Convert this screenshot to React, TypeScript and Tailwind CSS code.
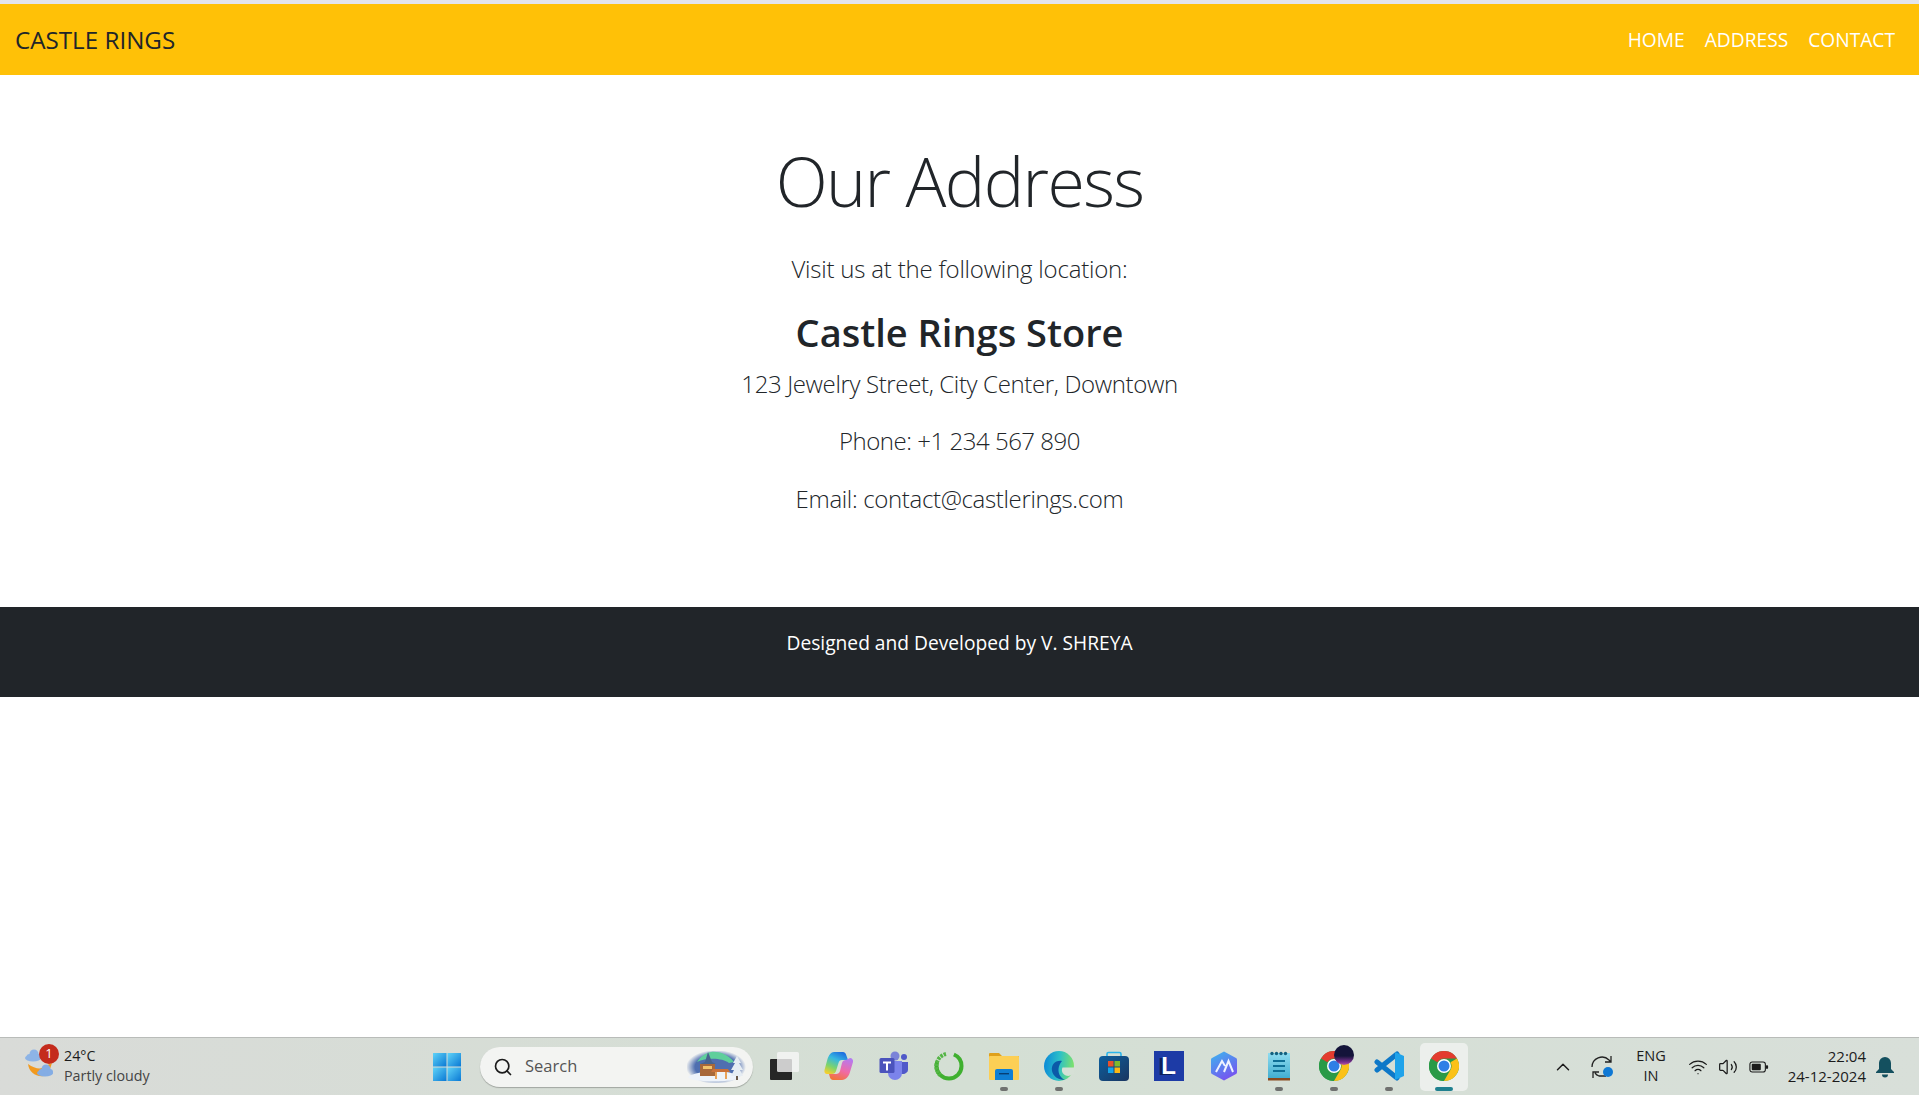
import React from "react"
import { ChevronUp, Search, Volume2, Wifi } from "lucide-react"

const font = "font-['Open_Sans','Noto_Sans',sans-serif]"

const Cloud = ({ x, y, fill }: { x: number; y: number; fill: string }) => (
  <g transform={`translate(${x} ${y})`} fill={fill}>
    <ellipse cx="8" cy="9" rx="8" ry="3.500" />
    <circle cx="9" cy="5" r="4.500" />
    <circle cx="4.500" cy="8" r="3" />
    <circle cx="13" cy="8" r="3" />
  </g>
)

const WeatherIcon = () => (
  <div className="relative h-[40px] w-[40px] shrink-0">
    <svg viewBox="0 0 40 40" className="h-full w-full">
      <Cloud x={5} y={2} fill="#8db4e6" />
      <path d="M8 17c1 9 10 15 20 11l4-12-7 3c-3 4-10 3-17-2z" fill="#f29a1f" />
      <Cloud x={17} y={17} fill="#84ade4" />
    </svg>
    <span className="absolute left-[19px] top-[-3px] flex h-[20px] w-[20px] items-center justify-center rounded-full bg-[#c42b1c] text-[13px] leading-none text-white">
      1
    </span>
  </div>
)

const StartIcon = () => (
  <svg viewBox="0 0 30 30" className="h-[30px] w-[30px]">
    <defs>
      <linearGradient id="win" x1="0" y1="0" x2="1" y2="1">
        <stop offset="0" stopColor="#5fd3f8" />
        <stop offset="1" stopColor="#0a78d4" />
      </linearGradient>
    </defs>
    <rect x="1" y="1" width="13.500" height="13.500" fill="url(#win)" />
    <rect x="15.500" y="1" width="13.500" height="13.500" fill="url(#win)" />
    <rect x="1" y="15.500" width="13.500" height="13.500" fill="url(#win)" />
    <rect x="15.500" y="15.500" width="13.500" height="13.500" fill="url(#win)" />
  </svg>
)

const SearchArt = () => (
  <svg viewBox="0 0 61 32" className="h-[32px] w-[61px]">
    <defs>
      <radialGradient id="halo" cx="0.5" cy="0.5" r="0.5">
        <stop offset="0.7" stopColor="#4f6fb0" />
        <stop offset="1" stopColor="#4f6fb0" stopOpacity="0" />
      </radialGradient>
    </defs>
    <ellipse cx="29" cy="16" rx="30" ry="17" fill="url(#halo)" />
    <path d="M10 11c4-6 9-9 14-10 7-1 17 2 23 10l-5 1c-6-5-22-6-32-1z" fill="#5fcf9c" />
    <path d="M1 26c10-7 42-8 52 0-4 6-48 6-52 0z" fill="#eef3fa" />
    <path d="M21 1l4 10 4 2H13l5-2z" fill="#47648f" />
    <rect x="13" y="13" width="15" height="12" fill="#a8683a" />
    <rect x="16" y="15" width="9" height="3" fill="#f2c36b" />
    <path d="M26 18h15l2 3H24z" fill="#c9713a" />
    <rect x="28" y="21" width="2" height="7" fill="#e8a25a" />
    <rect x="38" y="21" width="2" height="7" fill="#e8a25a" />
    <path d="M50 5l4 7-2 0 4 7-3 0 3 6H44l3-6-3 0 4-7-2 0z" fill="#e6edf3" />
    <rect x="49" y="25" width="2" height="4" fill="#6b5a4a" />
  </svg>
)

const TaskView = () => (
  <svg viewBox="0 0 30 30" className="h-[30px] w-[30px]">
    <rect x="1" y="8" width="22" height="21" rx="1" fill="#262626" />
    <rect x="8" y="1" width="22" height="20" rx="1.500" fill="#f6f6f6" fillOpacity="0.8" />
  </svg>
)

const Copilot = () => (
  <svg viewBox="0 0 30 30" className="h-[30px] w-[30px]">
    <defs>
      <linearGradient id="cp1" x1="0.7" y1="0" x2="0.2" y2="1">
        <stop offset="0" stopColor="#1f6fe0" />
        <stop offset="0.35" stopColor="#36b8e0" />
        <stop offset="0.7" stopColor="#7ed46a" />
        <stop offset="1" stopColor="#f6cf2e" />
      </linearGradient>
      <linearGradient id="cp2" x1="0.7" y1="0" x2="0.3" y2="1">
        <stop offset="0" stopColor="#b57af0" />
        <stop offset="0.55" stopColor="#f06aa6" />
        <stop offset="1" stopColor="#f2733a" />
      </linearGradient>
    </defs>
    <path d="M10 1h9c1.500 0 2.500 1 3 2.500L24 9h-6c-2 0-3 1-3.500 3l-2.500 8c-.5 2-2 3-4 3H3c-2 0-3-2-2.500-4l3-11C5 4 7 1 10 1z" fill="url(#cp1)" />
    <path d="M26 7c2 0 3.500 2 3 4l-3 10c-1 4-4 8-8 8H9c-1.500 0-2.500-1-3-2.500L5 23h7c2 0 3.500-1 4-3l2-8c.5-2 2-3 4-3z" fill="url(#cp2)" />
  </svg>
)

const Teams = () => (
  <svg viewBox="0 0 30 30" className="h-[30px] w-[30px]">
    <circle cx="16" cy="5" r="4.500" fill="#7b83d8" />
    <circle cx="25" cy="6" r="3" fill="#5059c9" />
    <path d="M21 11h8v8a5 5 0 0 1-8 3z" fill="#5059c9" />
    <path d="M9 10h14v12a7 7 0 0 1-14 0z" fill="#7b83eb" />
    <rect x="0.500" y="7" width="15" height="15" rx="1.500" fill="#4b53bc" />
    <path d="M4 10.500h8v2H9v7H7v-7H4z" fill="#fff" />
  </svg>
)

const RingApp = () => (
  <svg viewBox="0 0 30 30" className="h-[30px] w-[30px]">
    <circle cx="15" cy="15" r="12.500" fill="none" stroke="#3fb02f" strokeWidth="4" strokeDasharray="58 20.500" strokeDashoffset="15" />
    <path d="M12 3A12.500 12.500 0 0 0 6 24" fill="none" stroke="#54b545" strokeWidth="4" strokeDasharray="2.500 1" />
  </svg>
)

const Folder = () => (
  <svg viewBox="0 0 30 30" className="h-[30px] w-[30px]">
    <path d="M0 3a1 1 0 0 1 1-1h9l3 3h17v3H0z" fill="#dfa01c" />
    <rect x="0" y="5" width="30" height="24" rx="1" fill="#fccf55" />
    <path d="M6 20a2 2 0 0 1 2-2h14a2 2 0 0 1 2 2v9H6z" fill="#0f7fd4" />
    <rect x="10" y="22" width="10" height="1.400" fill="#063f74" />
  </svg>
)

const Edge = () => (
  <svg viewBox="0 0 30 30" className="h-[30px] w-[30px]">
    <defs>
      <linearGradient id="eg" x1="0" y1="0.4" x2="1" y2="0.5">
        <stop offset="0" stopColor="#0c8ad8" />
        <stop offset="0.5" stopColor="#2cc0c8" />
        <stop offset="1" stopColor="#80e26a" />
      </linearGradient>
    </defs>
    <circle cx="15" cy="15" r="15" fill="url(#eg)" />
    <path d="M30 16.500H18.500c-2 4 1 8.500 6 8.500L30 23z" fill="#d6e0d6" />
    <path d="M18 10C11 9 7 14 8 20c1 5 6 9 13 9-4-2-7-6-6.500-11 .3-3 1.500-6 3.500-8z" fill="#0b5aa8" />
  </svg>
)

const Store = () => (
  <svg viewBox="0 0 30 30" className="h-[30px] w-[30px]">
    <defs>
      <linearGradient id="st" x1="0" y1="0" x2="1" y2="1">
        <stop offset="0" stopColor="#0d5f9e" />
        <stop offset="1" stopColor="#1a3560" />
      </linearGradient>
    </defs>
    <path d="M8 7V3a1.500 1.500 0 0 1 1.500-1.500h11A1.500 1.500 0 0 1 22 3v4" fill="none" stroke="#2ab4ea" strokeWidth="1.600" />
    <rect x="0" y="5" width="30" height="25" rx="4" fill="url(#st)" />
    <rect x="9" y="10" width="5.500" height="5.500" fill="#e8512a" />
    <rect x="15.500" y="10" width="5.500" height="5.500" fill="#7fba2c" />
    <rect x="9" y="16.500" width="5.500" height="5.500" fill="#15a4ea" />
    <rect x="15.500" y="16.500" width="5.500" height="5.500" fill="#fdb813" />
  </svg>
)

const LApp = () => (
  <div className="relative flex h-[30px] w-[30px] items-center justify-center bg-[#1d3ba6] font-['Liberation_Sans',sans-serif] text-[24px] font-bold leading-none text-white">
    <span className="[text-shadow:-3px_1px_0_#0c1f5c]">L</span>
  </div>
)

const Hexagon = () => (
  <svg viewBox="0 0 30 30" className="h-[30px] w-[30px]">
    <defs>
      <linearGradient id="hx" x1="0.2" y1="0" x2="0.7" y2="1">
        <stop offset="0" stopColor="#3fb0ee" />
        <stop offset="1" stopColor="#7a4ff0" />
      </linearGradient>
    </defs>
    <path d="M15 .5l12 6.500a2 2 0 0 1 1 2v12a2 2 0 0 1-1 2l-12 6.500L3 23a2 2 0 0 1-1-2V9a2 2 0 0 1 1-2z" fill="url(#hx)" />
    <path d="M7 21l6-11 3 5M15 21l4.500-11L24 21" fill="none" stroke="#eef2ff" strokeWidth="2" />
  </svg>
)

const Notepad = () => (
  <svg viewBox="0 0 30 30" className="h-[30px] w-[30px]">
    <defs>
      <linearGradient id="np" x1="0" y1="0" x2="0" y2="1">
        <stop offset="0" stopColor="#8fdcf0" />
        <stop offset="1" stopColor="#42aed0" />
      </linearGradient>
    </defs>
    <rect x="4" y="2" width="22" height="25" fill="url(#np)" />
    <rect x="4" y="27" width="22" height="2.500" fill="#8a4a1e" />
    <circle cx="8" cy="2.500" r="1.700" fill="#14607e" />
    <circle cx="12.500" cy="2.500" r="1.700" fill="#14607e" />
    <circle cx="17" cy="2.500" r="1.700" fill="#14607e" />
    <circle cx="21.500" cy="2.500" r="1.700" fill="#14607e" />
    <path d="M9 10h12M9 15h12M9 20h12" stroke="#0f6f96" strokeWidth="1.800" />
  </svg>
)

const Chrome = () => (
  <svg viewBox="0 0 30 30" className="h-[30px] w-[30px]">
    <circle cx="15" cy="15" r="15" fill="#2a9a47" />
    <path d="M2 7.500A15 15 0 0 1 28 7.500L15 7.500A7.500 7.500 0 0 0 8.500 11.250z" fill="#e33b2e" />
    <path d="M2 7.500A15 15 0 0 1 28 7.500L15 7.500A7.500 7.500 0 0 0 8.500 11.250z" fill="#fbc117" transform="rotate(120 15 15)" />
    <path d="M2 7.500A15 15 0 0 1 28 7.500L15 7.500A7.500 7.500 0 0 0 8.500 11.250z" fill="#2a9a47" transform="rotate(240 15 15)" />
    <circle cx="15" cy="15" r="7" fill="#fff" />
    <circle cx="15" cy="15" r="5.500" fill="#2f7fe6" />
  </svg>
)

const ChromeProfile = () => (
  <div className="relative h-[30px] w-[30px]">
    <Chrome />
    <span className="absolute left-[15px] top-[-6px] h-[20px] w-[20px] rounded-full bg-[linear-gradient(180deg,#14143a_55%,#7a2f8f_85%,#c05a9a)]" />
  </div>
)

const VSCode = () => (
  <svg viewBox="0 0 30 30" className="h-[30px] w-[30px]">
    <path d="M23 3L3 19M3 11l20 16" stroke="#0d78c8" strokeWidth="5" strokeLinecap="round" />
    <path d="M21 1l9 4v20l-9 4z" fill="#1fa3ea" />
  </svg>
)

const SyncIcon = () => (
  <svg viewBox="0 0 28 28" className="h-[28px] w-[28px]">
    <path d="M3 14a10 10 0 0 1 17-7l2 2M22 3v6h-6M17 23H10a9 9 0 0 1-4-3M4 25v-6h6" fill="none" stroke="#222" strokeWidth="1.300" />
    <circle cx="19" cy="19" r="5" fill="#0f78d4" />
  </svg>
)

const BatteryIcon = () => (
  <svg viewBox="0 0 22 14" className="h-[14px] w-[20px]">
    <rect x="1" y="1.500" width="17" height="11" rx="2.500" fill="none" stroke="#1b1b1b" strokeWidth="1.200" />
    <rect x="3" y="3.500" width="10" height="7" rx="1" fill="#1b1b1b" />
    <rect x="18.500" y="5" width="2.500" height="4" rx="1" fill="#1b1b1b" />
  </svg>
)

const BellIcon = () => (
  <svg viewBox="0 0 20 22" className="h-[22px] w-[20px]">
    <path d="M10 1a6 6 0 0 1 6 6v6l3 3v1H1v-1l3-3V7a6 6 0 0 1 6-6z" fill="#14505f" />
    <path d="M7 18.500h6a3 3 0 0 1-6 0z" fill="#14505f" />
  </svg>
)

const taskApps = [
  { id: "task", icon: <TaskView /> },
  { id: "copilot", icon: <Copilot /> },
  { id: "teams", icon: <Teams /> },
  { id: "ring", icon: <RingApp /> },
  { id: "folder", icon: <Folder />, running: true },
  { id: "edge", icon: <Edge />, running: true },
  { id: "store", icon: <Store /> },
  { id: "l", icon: <LApp /> },
  { id: "hex", icon: <Hexagon /> },
  { id: "notepad", icon: <Notepad />, running: true },
  { id: "chrome2", icon: <ChromeProfile />, running: true },
  { id: "vscode", icon: <VSCode />, running: true },
  { id: "chrome", icon: <Chrome />, active: true },
]

const Taskbar = () => (
  <div className={`flex h-[58px] shrink-0 items-center border-t border-[#b9bcb9] bg-gradient-to-r from-[#d9dbd8] via-[#d4dfd4] to-[#d8dfd9] text-[#1b1b1b] ${font}`}>
    <div className="ml-[20px] flex w-[407px] shrink-0 items-center gap-[4px]">
      <WeatherIcon />
      <div className="-mt-[2px] text-[14.300px] leading-[20px]">
        <div>24°C</div>
        <div className="text-[#444]">Partly cloudy</div>
      </div>
    </div>
    <div className="flex w-[40px] shrink-0 justify-center">
      <StartIcon />
    </div>
    <div className="ml-[13px] flex h-[40px] w-[273px] shrink-0 items-center rounded-full bg-[#f3f4f2] pl-[13px] pr-[5px] shadow-[0_1px_1px_rgba(0,0,0,0.25)]">
      <Search className="h-[20px] w-[20px] text-[#1b1b1b]" strokeWidth={2} />
      <span className="ml-[12px] flex-1 text-[16.500px] text-[#555]">Search</span>
      <SearchArt />
    </div>
    <div className="ml-[3px] flex shrink-0 items-center">
      {taskApps.map((app) => (
        <div
          key={app.id}
          className={`relative mx-[3.500px] flex h-[48px] w-[48px] items-center justify-center rounded-[5px] pb-[2px] ${app.active ? "bg-[#ecefec]" : ""}`}
        >
          {app.icon}
          {app.running && <span className="absolute bottom-0 h-[4px] w-[8px] rounded-full bg-[#6f716f]" />}
          {app.active && <span className="absolute bottom-0 h-[4px] w-[18px] rounded-full bg-[#20808f]" />}
        </div>
      ))}
    </div>
    <div className="ml-[81px] flex flex-1 items-center">
      <ChevronUp className="h-[22px] w-[22px]" strokeWidth={1.6} />
      <div className="ml-[15px]">
        <SyncIcon />
      </div>
      <div className="-mt-[2px] ml-[14px] w-[40px] text-center text-[14.500px] leading-[20px]">
        <div>ENG</div>
        <div>IN</div>
      </div>
      <Wifi className="ml-[17px] h-[20px] w-[20px]" strokeWidth={1.5} />
      <Volume2 className="ml-[10px] h-[20px] w-[20px]" strokeWidth={1.5} />
      <div className="ml-[11px]">
        <BatteryIcon />
      </div>
      <div className="-mt-[2px] ml-auto text-right text-[15px] leading-[20px]">
        <div>22:04</div>
        <div>24-12-2024</div>
      </div>
      <div className="ml-[9px] mr-[24px]">
        <BellIcon />
      </div>
    </div>
  </div>
)

export default function App() {
  return (
    <div className={`flex h-screen flex-col overflow-hidden bg-white text-[#212529] ${font}`}>
      <div className="h-[4px] bg-[#e3e5ec]" />
      <nav className="flex h-[71px] shrink-0 items-center justify-between bg-[#ffc107] pl-[15px] pr-[24px] pt-[2px]">
        <a className="text-[24.200px] text-[#212529]">CASTLE RINGS</a>
        <div className="flex gap-[20px] text-[19.200px] text-white">
          <a>HOME</a>
          <a>ADDRESS</a>
          <a>CONTACT</a>
        </div>
      </nav>
      <main className="h-[532px] shrink-0 pt-[64.500px] text-center">
        <h1 className="text-[68px] font-light leading-[1.2] tracking-[-1.6px]">Our Address</h1>
        <p className="mt-[29.500px] text-[24px] font-light leading-[1.5] tracking-[-0.2px]">Visit us at the following location:</p>
        <h2 className="mt-[23px] text-[38px] font-semibold leading-[1.2]">Castle Rings Store</h2>
        <p className="mt-[11px] text-[24px] font-light leading-[1.5] tracking-[-0.36px]">123 Jewelry Street, City Center, Downtown</p>
        <p className="mt-[21px] text-[24px] font-light leading-[1.5] tracking-[-0.47px]">Phone: +1 234 567 890</p>
        <p className="mt-[22px] text-[24px] font-light leading-[1.5] tracking-[-0.34px]">Email: contact@castlerings.com</p>
      </main>
      <footer className="h-[90px] shrink-0 bg-[#212529] pt-[22px] text-center text-[19.200px] leading-[28px] text-white">
        Designed and Developed by V. SHREYA
      </footer>
      <div className="flex-1" />
      <Taskbar />
    </div>
  )
}
